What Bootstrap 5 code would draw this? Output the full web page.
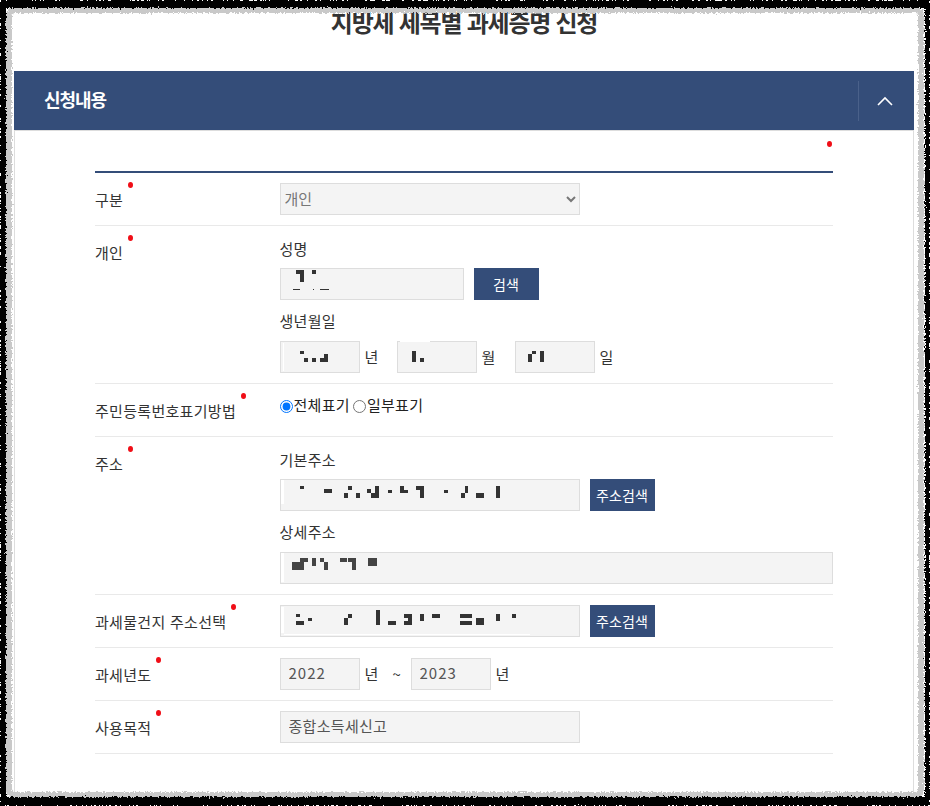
<!DOCTYPE html>
<html lang="ko">
<head>
<meta charset="utf-8">
<title>지방세 세목별 과세증명 신청</title>
<link href="https://cdn.jsdelivr.net/npm/bootstrap@5.3.0/dist/css/bootstrap.min.css" rel="stylesheet">
<style>
html,body{height:806px;overflow:hidden;background:#fff}
body{font-family:"Noto Sans CJK KR","Liberation Sans",sans-serif;font-size:15px;letter-spacing:.3px;color:#333;position:relative}
.shell{padding:0 16px 0 14px}
.page-title{font-size:24px;font-weight:700;letter-spacing:-1.25px;color:#333;text-align:center;line-height:30px;margin:0;padding:7px 0 34px}
.sec-head{height:59px;background:#344d79;color:#fff;padding:0 0 0 30px}
.sec-title{font-size:18px;font-weight:700;letter-spacing:-1.1px;line-height:56px;margin:0 0 3px}
.sec-toggle{width:56px;height:40px;border-left:1px solid #4a618a;margin-top:1px;padding-right:4px}
.sec-body{height:664px;border:1px solid #ddd;padding:40px 80px 0 80px;position:relative}
.req-top{position:absolute;left:812px;top:10px}
.dot{display:block;width:5px;height:6px;border-radius:50%;background:#f00e17}
.frm{border-top:2px solid #344d79;width:738px}
.frm-row{border-bottom:1px solid #e9e9e9;padding:10px 0}
.lab{line-height:20px;padding-top:7px;color:#333}
.lab-txt{position:relative;display:inline-block}
.lab-txt .dot{position:absolute;right:-10px;top:-8px}
.sub-lab{line-height:20px;margin:3px 0 9px;color:#333}
.sub-lab.next{margin:11px 0 10px}
.fld{height:32px;border:1px solid #ddd;border-radius:0;background-color:#f4f4f4;color:#555;font-size:15px;letter-spacing:.3px;padding:0 8px 3px;box-shadow:none}
.fld:focus{background-color:#f4f4f4;border-color:#ddd;box-shadow:none}
.fld.num{letter-spacing:1px}
.w300{width:300px}
.w184{width:184px}
.w80{width:80px}
.w553{width:553px}
.masked{position:relative;display:block}
.mask-art{position:absolute;left:0;top:0;pointer-events:none}
.sel{height:32px;border:1px solid #ddd;border-radius:0;background-color:#f4f4f4;color:#777;font-size:15px;padding:0 0 2px;width:300px;display:block}
.act{width:65px;height:32px;background:#344d79;color:#fff;border:0;border-radius:0;font-size:14px;padding:0;line-height:32px;letter-spacing:.1px}
.act:hover{background:#344d79;color:#fff}
.gap10{gap:10px}
.unit{width:37px;padding-left:5px;line-height:32px}
.unit.y2{width:34px}
.unit.y3{width:33px}
.tilde{width:18px;line-height:32px;text-align:left}
.radio-line{line-height:20px;height:32px;padding-top:1px;color:#222}
.radio-line input{margin:0 1px 0 0;vertical-align:-2px;width:13px;height:13px}
.radio-line label{margin-right:3px}
.frame-art{position:absolute;left:0;top:0;pointer-events:none}
</style>
</head>
<body>
<div class="shell">
  <h2 class="page-title">지방세 세목별 과세증명 신청</h2>
  <div class="sec-head d-flex justify-content-between align-items-center">
    <h3 class="sec-title">신청내용</h3>
    <div class="sec-toggle d-flex align-items-center justify-content-center">
      <svg width="16" height="10" viewBox="0 0 16 10"><path d="M1 9 L8 2 L15 9" fill="none" stroke="#fff" stroke-width="1.6"/></svg>
    </div>
  </div>
  <div class="sec-body">
    <span class="req-top"><i class="dot"></i></span>
    <div class="frm">

      <div class="row g-0 frm-row">
        <div class="col-3 lab"><span class="lab-txt">구분<i class="dot"></i></span></div>
        <div class="col-9">
          <select class="sel"><option>개인</option></select>
        </div>
      </div>

      <div class="row g-0 frm-row">
        <div class="col-3 lab"><span class="lab-txt">개인<i class="dot"></i></span></div>
        <div class="col-9">
          <div class="sub-lab">성명</div>
          <div class="d-flex gap10">
            <span class="masked w184">
              <input class="form-control fld w184" readonly>
              <svg class="mask-art" width="184" height="32" viewBox="280 268 184 32" fill="#333">
                <path d="M296 270h8v12h-4v-8h-4zM312 270h4v4h-4z"/>
                <path d="M293 289h7v1h-7zM313 289h1v1h-1zM320 289h9v1h-9z"/>
              </svg>
            </span>
            <button type="button" class="btn act">검색</button>
          </div>
          <div class="sub-lab next">생년월일</div>
          <div class="d-flex">
            <span class="masked w80">
              <input class="form-control fld w80" readonly>
              <svg class="mask-art" width="80" height="32" viewBox="280 341 80 32" fill="#333">
                <path d="M283 343h1v28h-1z" fill="#fff"/>
                <path d="M300 351h4v3h-4zM304 358h4v4h-4zM312 358h4v4h-4zM320 358h4v4h-4zM324 354h4v8h-4z"/>
              </svg>
            </span>
            <span class="unit">년</span>
            <span class="masked w80">
              <input class="form-control fld w80" readonly>
              <svg class="mask-art" width="80" height="32" viewBox="397 341 80 32" fill="#333">
                <path d="M400 341h30v1h-30z" fill="#fff"/>
                <path d="M412 351h4v11h-4zM420 358h4v4h-4z"/>
              </svg>
            </span>
            <span class="unit y2">월</span>
            <span class="masked w80 ms-1">
              <input class="form-control fld w80" readonly>
              <svg class="mask-art" width="80" height="32" viewBox="515 341 80 32" fill="#333">
                <path d="M528 354h4v8h-4zM532 351h4v3h-4zM540 351h4v11h-4z"/>
              </svg>
            </span>
            <span class="unit">일</span>
          </div>
        </div>
      </div>

      <div class="row g-0 frm-row">
        <div class="col-3 lab"><span class="lab-txt">주민등록번호표기방법<i class="dot"></i></span></div>
        <div class="col-9 radio-line">
          <label><input type="radio" name="mark" checked>전체표기</label><label><input type="radio" name="mark">일부표기</label>
        </div>
      </div>

      <div class="row g-0 frm-row">
        <div class="col-3 lab"><span class="lab-txt">주소<i class="dot"></i></span></div>
        <div class="col-9">
          <div class="sub-lab">기본주소</div>
          <div class="d-flex gap10">
            <span class="masked w300">
              <input class="form-control fld w300" readonly>
              <svg class="mask-art" width="300" height="32" viewBox="280 479 300 32" fill="#333">
                <path d="M281 480h3v24h-3z" fill="#fff"/>
                <path d="M300 486h4v3h-4zM324 489h8v4h-8zM348 486h4v4h-4zM344 493h4v5h-4zM356 493h4v5h-4zM367 489h4v4h-4zM371 493h8v5h-8zM375 486h4v7h-4zM388 490h4v3h-4zM400 486h4v7h-4zM404 490h4v3h-4zM416 486h8v4h-8zM420 490h4v8h-4zM444 490h4v3h-4zM465 486h3v7h-3zM461 493h4v5h-4zM476 493h8v5h-8zM496 486h4v12h-4z"/>
              </svg>
            </span>
            <button type="button" class="btn act">주소검색</button>
          </div>
          <div class="sub-lab next">상세주소</div>
          <span class="masked w553">
            <input class="form-control fld w553" readonly>
            <svg class="mask-art" width="553" height="32" viewBox="280 552 553 32" fill="#444">
              <path d="M281 553h3v29h-3z" fill="#fff"/>
              <path d="M292 562h12v8h-12zM300 558h8v4h-8zM312 558h4v8h-4zM320 558h4v4h-4zM324 562h4v8h-4zM340 558h7v4h-7zM348 558h8v4h-8zM352 562h4v8h-4zM368 558h9v8h-9z"/>
            </svg>
          </span>
        </div>
      </div>

      <div class="row g-0 frm-row">
        <div class="col-3 lab"><span class="lab-txt">과세물건지 주소선택<i class="dot"></i></span></div>
        <div class="col-9">
          <div class="d-flex gap10">
            <span class="masked w300">
              <input class="form-control fld w300" readonly>
              <svg class="mask-art" width="300" height="32" viewBox="280 605 300 32" fill="#333">
                <path d="M281 607h3v26h-3zM284 634h246v1h-246z" fill="#fff"/>
                <path d="M296 614h4v3h-4zM296 621h8v4h-8zM308 618h4v3h-4zM348 614h4v4h-4zM344 618h4v7h-4zM376 610h4v15h-4zM388 621h8v4h-8zM404 614h4v4h-4zM408 614h4v7h-4zM404 621h8v4h-8zM420 614h4v7h-4zM432 614h8v4h-8zM460 614h12v4h-12zM460 621h12v4h-12zM476 618h8v7h-8zM496 614h4v7h-4zM512 614h4v4h-4z"/>
              </svg>
            </span>
            <button type="button" class="btn act">주소검색</button>
          </div>
        </div>
      </div>

      <div class="row g-0 frm-row">
        <div class="col-3 lab"><span class="lab-txt">과세년도<i class="dot"></i></span></div>
        <div class="col-9">
          <div class="d-flex">
            <input class="form-control fld num w80" value="2022" readonly>
            <span class="unit y3">년</span>
            <span class="tilde">~</span>
            <input class="form-control fld num w80" value="2023" readonly>
            <span class="unit">년</span>
          </div>
        </div>
      </div>

      <div class="row g-0 frm-row">
        <div class="col-3 lab"><span class="lab-txt">사용목적<i class="dot"></i></span></div>
        <div class="col-9">
          <input class="form-control fld w300" value="종합소득세신고" readonly>
        </div>
      </div>

    </div>
  </div>
</div>

<svg class="frame-art" width="930" height="806" viewBox="0 0 930 806" aria-hidden="true">
  <defs>
    <filter id="torn" x="-5%" y="-5%" width="110%" height="110%">
      <feTurbulence type="fractalNoise" baseFrequency="0.55" numOctaves="2" seed="7" result="n"/>
      <feDisplacementMap in="SourceGraphic" in2="n" scale="5" xChannelSelector="R" yChannelSelector="G"/>
    </filter>
  </defs>
  <rect x="9" y="10" width="912" height="785" rx="5" fill="none" stroke="#c9c9c9" stroke-width="6" filter="url(#torn)"/>
  <path fill-rule="evenodd" d="M0 0H930V806H0ZM6 8V797H925V8Z" fill="#000" filter="url(#torn)"/>
</svg>
<script src="https://cdn.jsdelivr.net/npm/bootstrap@5.3.0/dist/js/bootstrap.bundle.min.js"></script>
</body>
</html>
